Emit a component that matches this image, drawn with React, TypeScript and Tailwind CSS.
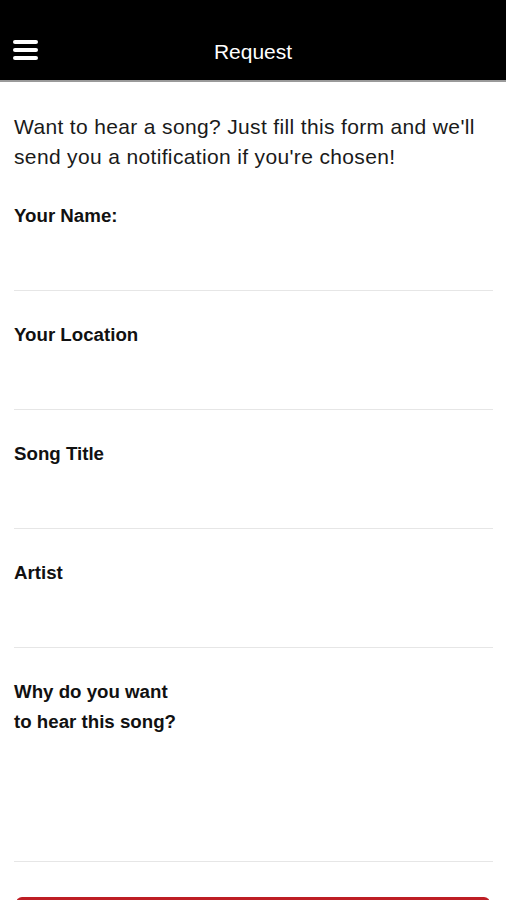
const fields = [
  { label: "Your Name:", lines: 1 },
  { label: "Your Location", lines: 1 },
  { label: "Song Title", lines: 1 },
  { label: "Artist", lines: 1 },
];

function Hamburger() {
  return (
    <svg width="28" height="22" viewBox="0 0 28 22" aria-hidden="true">
      <rect x="1" y="1" width="25" height="4" rx="2" fill="#fff" />
      <rect x="1" y="9" width="25" height="4" rx="2" fill="#fff" />
      <rect x="1" y="17" width="25" height="4" rx="2" fill="#fff" />
    </svg>
  );
}

export default function App() {
  return (
    <div className="h-[900px] w-[506px] overflow-hidden bg-white font-['Liberation_Sans',Arial,sans-serif] text-[#111]">
      <header className="relative flex h-[82px] justify-center border-b-2 border-[#9a9a9a] bg-black">
        <button className="absolute left-[12px] top-[39px]">
          <Hamburger />
        </button>
        <h1 className="pt-[39px] text-[21px] leading-[26px] text-white">Request</h1>
      </header>

      <main className="pl-[14px] pr-[13px] pt-[30px]">
        <p className="text-[21px] leading-[30px] tracking-[0.35px] text-[#1a1a1a]">
          Want to hear a song? Just fill this form and we'll send you a notification if you're chosen!
        </p>

        {fields.map((f) => (
          <div key={f.label} className="border-b border-[#e6e6e6] pt-[29px]">
            <label className="block text-[18.7px] font-bold leading-[30px]">{f.label}</label>
            <div className="h-[59px]" />
          </div>
        ))}

        <div className="border-b border-[#e6e6e6] pt-[29px]">
          <label className="block text-[18.7px] font-bold leading-[30px]">
            Why do you want
            <br />
            to hear this song?
          </label>
          <div className="h-[124px]" />
        </div>

        <div className="pt-[35px]">
          <button className="mx-[2px] block h-[48px] w-[474px] rounded-[6px] bg-[#be1e24] text-white" />
        </div>
      </main>
    </div>
  );
}
